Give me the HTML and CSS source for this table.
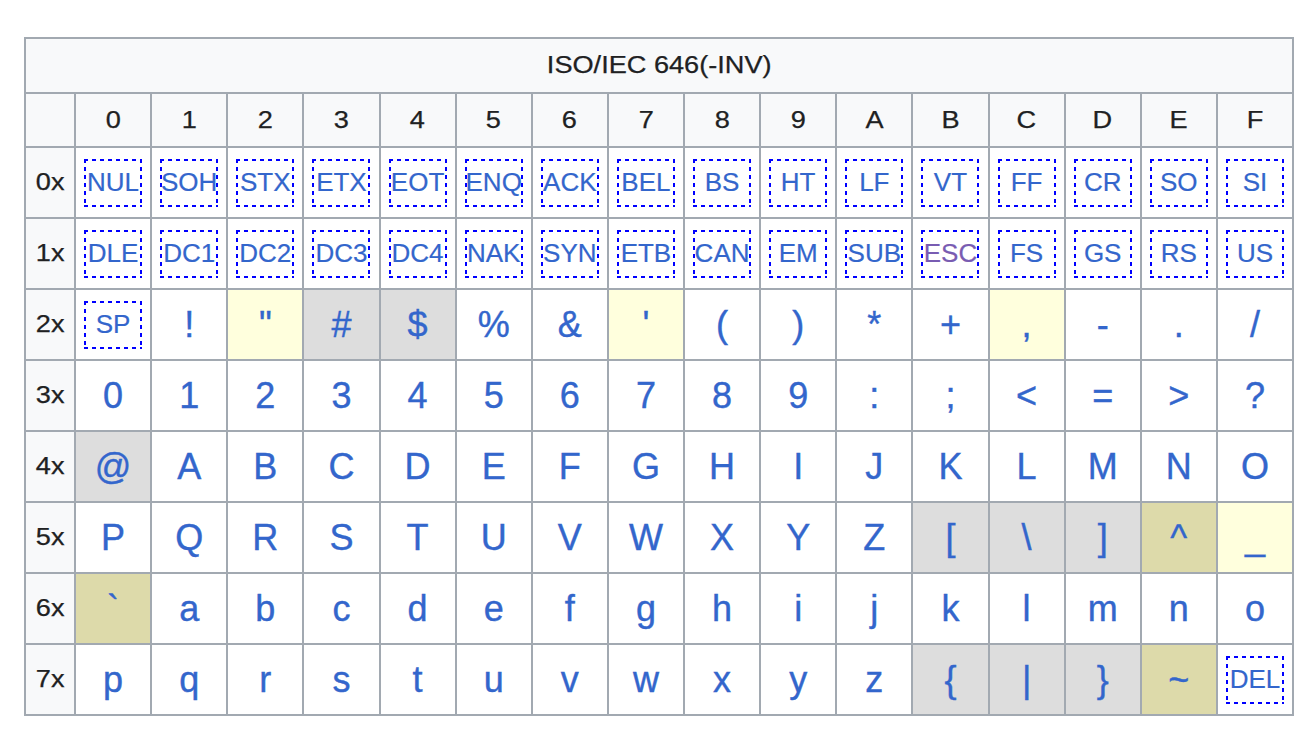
FILE: index.html
```html
<!DOCTYPE html>
<html>
<head>
<meta charset="utf-8">
<link rel="stylesheet" href="styles.css">
</head>
<body>
<div class="page">
<table class="chart">
<colgroup><col class="c-lab"><col span="16"></colgroup>
<tr class="r-title"><th colspan="17" class="title"><span class="h">ISO/IEC 646(-INV)</span></th></tr>
<tr class="r-head"><th></th><th><span class="h">0</span></th><th><span class="h">1</span></th><th><span class="h">2</span></th><th><span class="h">3</span></th><th><span class="h">4</span></th><th><span class="h">5</span></th><th><span class="h">6</span></th><th><span class="h">7</span></th><th><span class="h">8</span></th><th><span class="h">9</span></th><th><span class="h">A</span></th><th><span class="h">B</span></th><th><span class="h">C</span></th><th><span class="h">D</span></th><th><span class="h">E</span></th><th><span class="h">F</span></th></tr>
<tr><th><span class="h">0x</span></th><td><span class="ctl">NUL</span></td><td><span class="ctl">SOH</span></td><td><span class="ctl">STX</span></td><td><span class="ctl">ETX</span></td><td><span class="ctl">EOT</span></td><td><span class="ctl">ENQ</span></td><td><span class="ctl">ACK</span></td><td><span class="ctl">BEL</span></td><td><span class="ctl">BS</span></td><td><span class="ctl">HT</span></td><td><span class="ctl">LF</span></td><td><span class="ctl">VT</span></td><td><span class="ctl">FF</span></td><td><span class="ctl">CR</span></td><td><span class="ctl">SO</span></td><td><span class="ctl">SI</span></td></tr>
<tr><th><span class="h">1x</span></th><td><span class="ctl">DLE</span></td><td><span class="ctl">DC1</span></td><td><span class="ctl">DC2</span></td><td><span class="ctl">DC3</span></td><td><span class="ctl">DC4</span></td><td><span class="ctl">NAK</span></td><td><span class="ctl">SYN</span></td><td><span class="ctl">ETB</span></td><td><span class="ctl">CAN</span></td><td><span class="ctl">EM</span></td><td><span class="ctl">SUB</span></td><td><span class="ctl visited">ESC</span></td><td><span class="ctl">FS</span></td><td><span class="ctl">GS</span></td><td><span class="ctl">RS</span></td><td><span class="ctl">US</span></td></tr>
<tr><th><span class="h">2x</span></th><td><span class="ctl">SP</span></td><td>!</td><td class="y">"</td><td class="g">#</td><td class="g">$</td><td>%</td><td>&amp;</td><td class="y">'</td><td>(</td><td>)</td><td>*</td><td>+</td><td class="y">,</td><td>-</td><td>.</td><td>/</td></tr>
<tr><th><span class="h">3x</span></th><td>0</td><td>1</td><td>2</td><td>3</td><td>4</td><td>5</td><td>6</td><td>7</td><td>8</td><td>9</td><td>:</td><td>;</td><td>&lt;</td><td>=</td><td>&gt;</td><td>?</td></tr>
<tr><th><span class="h">4x</span></th><td class="g">@</td><td>A</td><td>B</td><td>C</td><td>D</td><td>E</td><td>F</td><td>G</td><td>H</td><td>I</td><td>J</td><td>K</td><td>L</td><td>M</td><td>N</td><td>O</td></tr>
<tr><th><span class="h">5x</span></th><td>P</td><td>Q</td><td>R</td><td>S</td><td>T</td><td>U</td><td>V</td><td>W</td><td>X</td><td>Y</td><td>Z</td><td class="g">[</td><td class="g">\</td><td class="g">]</td><td class="o">^</td><td class="y">_</td></tr>
<tr><th><span class="h">6x</span></th><td class="o">`</td><td>a</td><td>b</td><td>c</td><td>d</td><td>e</td><td>f</td><td>g</td><td>h</td><td>i</td><td>j</td><td>k</td><td>l</td><td>m</td><td>n</td><td>o</td></tr>
<tr><th><span class="h">7x</span></th><td>p</td><td>q</td><td>r</td><td>s</td><td>t</td><td>u</td><td>v</td><td>w</td><td>x</td><td>y</td><td>z</td><td class="g">{</td><td class="g">|</td><td class="g">}</td><td class="o">~</td><td><span class="ctl">DEL</span></td></tr>
</table>
</div>
</body>
</html>
```
FILE: styles.css
```css
html, body {
  margin: 0;
  padding: 0;
  background: #ffffff;
}
.page {
  padding: 37px 0 0 24px;
  font-family: "Liberation Sans", Arial, sans-serif;
}
.chart {
  border-collapse: collapse;
  table-layout: fixed;
  width: 1270px;
  border: 2px solid #a2a9b1;
}
.c-lab { width: 50px; }
.chart th, .chart td {
  border: 2px solid #a2a9b1;
  padding: 0;
  text-align: center;
  vertical-align: middle;
}
.chart th {
  background: #f8f9fa;
  color: #202122;
  font-weight: normal;
  font-size: 23px;
}
.h {
  display: inline-block;
  transform: scaleX(1.18);
  -webkit-text-stroke: 0.25px #202122;
}
.chart td {
  background: #ffffff;
  color: #3366cc;
  font-size: 36px;
  height: 69px;
  -webkit-text-stroke: 0.4px #3366cc;
}
.r-title th { height: 53px; }
.r-head th { height: 52px; }
.chart td.g { background: #dddddd; }
.chart td.y { background: #ffffdd; }
.chart td.o { background: #dddaaa; }
.ctl {
  display: inline-flex;
  justify-content: center;
  align-items: center;
  width: 58px;
  height: 48px;
  font-size: 26px;
  color: #3366cc;
  vertical-align: middle;
  -webkit-text-stroke: 0.2px #3366cc;
  background:
    repeating-linear-gradient(90deg, #0000ff 0 4px, transparent 4px 8px) left top / 100% 2px no-repeat,
    repeating-linear-gradient(90deg, #0000ff 0 4px, transparent 4px 8px) left bottom / 100% 2px no-repeat,
    repeating-linear-gradient(180deg, #0000ff 0 4px, transparent 4px 8px) left top / 2px 100% no-repeat,
    repeating-linear-gradient(180deg, #0000ff 0 4px, transparent 4px 8px) right top / 2px 100% no-repeat;
}
.ctl.visited { color: #795cb2; -webkit-text-stroke-color: #795cb2; }
```
